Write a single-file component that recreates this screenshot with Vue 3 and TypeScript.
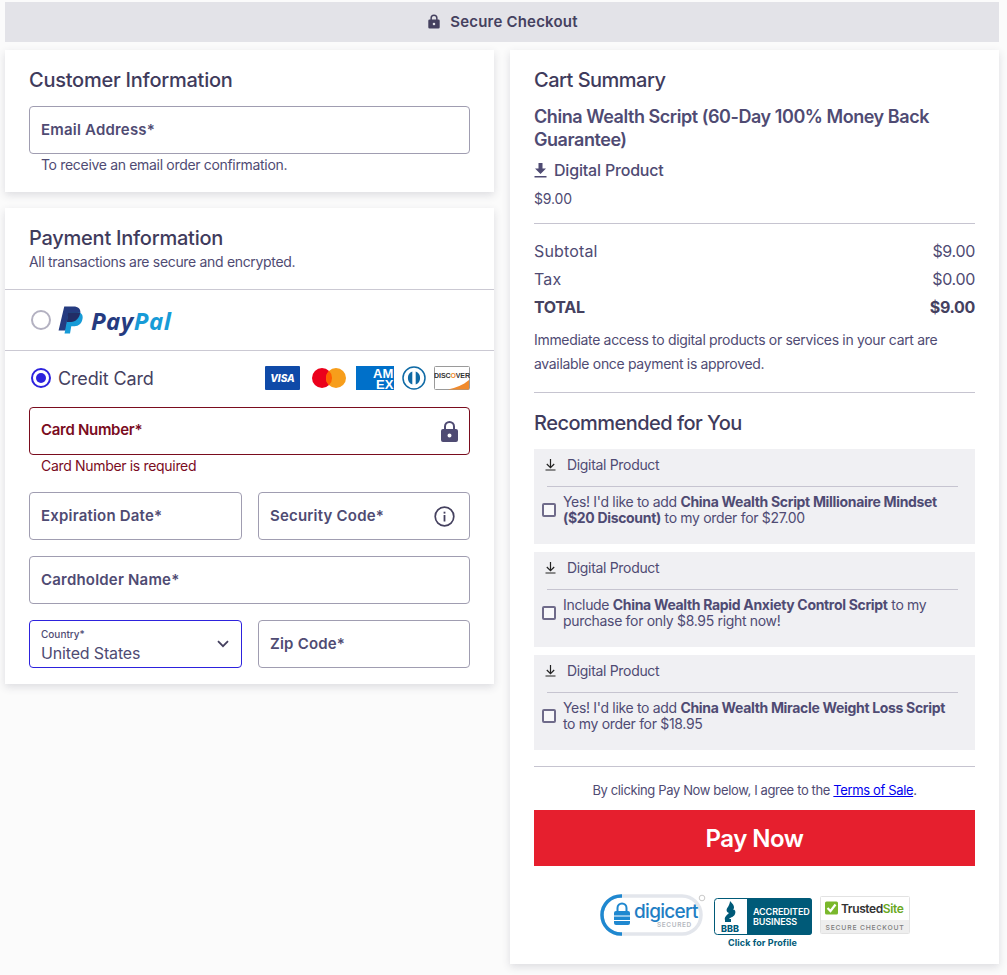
<script setup lang="ts">
interface Offer { before: string; bold: string; after: string }
const offers: Offer[] = [
  { before: "Yes! I'd like to add ", bold: 'China Wealth Script Millionaire Mindset ($20 Discount)', after: ' to my order for $27.00' },
  { before: 'Include ', bold: 'China Wealth Rapid Anxiety Control Script', after: ' to my purchase for only $8.95 right now!' },
  { before: "Yes! I'd like to add ", bold: 'China Wealth Miracle Weight Loss Script', after: ' to my order for $18.95' },
]
</script>

<template>
  <div class="page">
    <header class="topbar">
      <svg class="toplock" viewBox="0 0 12 15" width="12" height="15"><path fill="#45415f" fill-rule="evenodd" d="M6 .5a3.6 3.6 0 0 0-3.6 3.6V5.500H1.600A1.300 1.300 0 0 0 .3 6.800v6.400a1.300 1.300 0 0 0 1.300 1.300h8.800a1.300 1.300 0 0 0 1.300-1.300V6.800a1.300 1.300 0 0 0-1.300-1.300H9.600V4.100A3.600 3.600 0 0 0 6 .5Zm-2.100 5V4.100a2.100 2.100 0 0 1 4.200 0v1.400ZM6 8.700a1.300 1.300 0 1 1 0 2.600 1.300 1.300 0 0 1 0-2.600Z"/></svg>
      <span>Secure Checkout</span>
    </header>

    <main class="columns">
      <div class="left">
        <section class="card customer">
          <h2>Customer Information</h2>
          <div class="field"><span class="label">Email Address*</span></div>
          <p class="help">To receive an email order confirmation.</p>
        </section>

        <section class="card payment">
          <div class="payhead">
            <h2>Payment Information</h2>
            <p>All transactions are secure and encrypted.</p>
          </div>
          <div class="paypal">
            <span class="radio"></span>
            <svg class="pp" viewBox="0 0 26 28" width="25" height="28">
              <path fill="#253b80" d="M6.500 0h9.500c5 0 8 2.600 7.200 7.500-.8 5.500-4.700 8.500-9.500 8.500H9.800L8 25H.6Z"/>
              <path fill="#179bd7" d="M11 6h8.500c4.500 0 6.800 2.500 6 6.800-.8 5-4 7.700-8.300 7.700h-3.400L12.500 28H6.800Z"/>
              <path fill="#222d65" d="M10.600 6h9.600c1 0 2.100.2 2.900.5-.9 5.500-4.700 9.500-9.600 9.500H9.200Z"/>
            </svg>
            <span class="ppword"><i class="p1">Pay</i><i class="p2">Pal</i></span>
          </div>
          <div class="credit">
            <div class="ccrow">
              <span class="radio on"></span>
              <span class="cclabel">Credit Card</span>
              <div class="ccicons">
                <svg width="35" height="24" viewBox="0 0 35 24"><rect width="35" height="24" rx="1" fill="#0f4aa8"/><text x="17.500" y="16" text-anchor="middle" class="visa">VISA</text></svg>
                <svg width="34" height="20" viewBox="0 0 34 20"><circle cx="10" cy="10" r="10" fill="#eb001b"/><circle cx="24" cy="10" r="10" fill="#f79e1b"/><path fill="#ff5f00" d="M17 2.800a10 10 0 0 1 0 14.400 10 10 0 0 1 0-14.400Z"/></svg>
                <svg width="38" height="24" viewBox="0 0 38 24"><rect width="38" height="24" fill="#0070c9"/><text x="17" y="12" class="amex">AM</text><text x="20" y="22.500" class="amex">EX</text></svg>
                <svg width="24" height="24" viewBox="0 0 24 24"><circle cx="12" cy="12" r="11" fill="#fff" stroke="#0f6aa5" stroke-width="1.500"/><path fill="#0f6aa5" d="M10.300 5.500v13a7 7 0 0 1 0-13Zm3.400 0a7 7 0 0 1 0 13Z"/></svg>
                <svg width="36" height="24" viewBox="0 0 36 24"><rect x=".5" y=".5" width="35" height="23" rx="1" fill="#fff" stroke="#9a9a9a"/><path fill="#f08a2c" d="M35 14v9.500H14C22 22 29 19 35 14Z"/><text x="18" y="12" text-anchor="middle" class="disc">DISC<tspan fill="#f08a2c">O</tspan>VER</text></svg>
              </div>
            </div>
            <div class="field error">
              <span class="label">Card Number*</span>
              <svg class="fieldicon" width="17" height="21" viewBox="0 0 17 21"><path fill="#4f4b73" fill-rule="evenodd" d="M8.500 0A5.500 5.500 0 0 0 3 5.500V8H2a2 2 0 0 0-2 2v9a2 2 0 0 0 2 2h13a2 2 0 0 0 2-2v-9a2 2 0 0 0-2-2h-1V5.500A5.500 5.500 0 0 0 8.500 0ZM5 8V5.500a3.500 3.500 0 0 1 7 0V8Zm3.500 4.500a2 2 0 1 1 0 4 2 2 0 0 1 0-4Z"/></svg>
            </div>
            <p class="errtext">Card Number is required</p>
            <div class="grid">
              <div class="field"><span class="label">Expiration Date*</span></div>
              <div class="field">
                <span class="label">Security Code*</span>
                <svg class="fieldicon info" width="21" height="21" viewBox="0 0 21 21"><circle cx="10.500" cy="10.500" r="9.300" fill="none" stroke="#45415f" stroke-width="1.700"/><rect x="9.600" y="9" width="1.800" height="6.500" fill="#45415f"/><rect x="9.600" y="5.700" width="1.800" height="1.900" fill="#45415f"/></svg>
              </div>
              <div class="field wide"><span class="label">Cardholder Name*</span></div>
              <div class="field select">
                <span class="mini">Country*</span>
                <span class="value">United States</span>
                <svg class="chev" width="12" height="8" viewBox="0 0 12 8"><path d="M1 1.200 6 6.200l5-5" fill="none" stroke="#45415f" stroke-width="1.800"/></svg>
              </div>
              <div class="field"><span class="label">Zip Code*</span></div>
            </div>
          </div>
        </section>
      </div>

      <aside class="card summary">
        <h2>Cart Summary</h2>
        <h3>China Wealth Script (60-Day 100% Money Back Guarantee)</h3>
        <div class="digital">
          <svg width="13" height="15" viewBox="0 0 13 15"><path fill="#4f4b73" d="M4.500 0h4v5.500H12L6.500 11 1 5.500h3.500ZM.5 13h12v1.600H.5Z"/></svg>
          <span>Digital Product</span>
        </div>
        <div class="price">$9.00</div>
        <hr />
        <div class="total"><span>Subtotal</span><span>$9.00</span></div>
        <div class="total"><span>Tax</span><span>$0.00</span></div>
        <div class="total strong"><span>TOTAL</span><span>$9.00</span></div>
        <p class="note">Immediate access to digital products or services in your cart are available once payment is approved.</p>
        <hr class="hr2" />
        <h2 class="rec">Recommended for You</h2>
        <div class="offers">
          <div v-for="(o, i) in offers" :key="i" class="offer">
            <div class="offerhead">
              <svg width="11" height="12" viewBox="0 0 11 12"><path d="M5.500 0v8.500M1.800 5 5.500 8.700 9.200 5M.5 11h10" fill="none" stroke="#222" stroke-width="1.200"/></svg>
              <span>Digital Product</span>
            </div>
            <div class="offerline"></div>
            <div class="offerbody">
              <span class="check"></span>
              <p>{{ o.before }}<b>{{ o.bold }}</b>{{ o.after }}</p>
            </div>
          </div>
        </div>
        <hr class="hr3" />
        <p class="terms">By clicking Pay Now below, I agree to the <a href="#">Terms of Sale</a>.</p>
        <button class="pay" type="button">Pay Now</button>
        <div class="badges">
          <svg width="106" height="44" viewBox="0 0 106 44" class="digicert">
            <rect x="2" y="2" width="99" height="38" rx="19" fill="none" stroke="#e3e6ec" stroke-width="3.500"/>
            <path d="M22 2H21A19 19 0 0 0 21 40H22" fill="none" stroke="#1f88d0" stroke-width="3.500"/>
            <path d="M17.500 17v-3a4.500 4.500 0 0 1 9 0v3" fill="none" stroke="#1f88d0" stroke-width="2"/>
            <rect x="14" y="17" width="16" height="14" rx="2" fill="#1f88d0"/>
            <path d="M14 22h16M14 26.500h16" stroke="#fff" stroke-width="1"/>
            <text x="34" y="24" class="dc1">digicert</text>
            <text x="57" y="33" class="dc2">SECURED</text>
            <circle cx="102" cy="4" r="2.800" fill="none" stroke="#bbb" stroke-width=".8"/>
          </svg>
          <div class="bbb">
            <svg width="98" height="38" viewBox="0 0 98 38">
              <rect x=".5" y=".5" width="97" height="36" rx="3" fill="#fff" stroke="#005a78"/>
              <path d="M33 0h62a3 3 0 0 1 3 3v31a3 3 0 0 1-3 3H33Z" fill="#005a78"/>
              <path fill="#005a78" d="M16 3c4 4 5 6 3 9 2-1 3 2 2 4-1 3-4 3-6 5h2v3h-6v-2c-1-3 2-5 4-7-3-1-3-4-1-6 1-2 2-4 2-6Z"/>
              <text x="7" y="33.500" class="bbbt">BBB</text>
              <text x="39" y="17" class="acc">ACCREDITED</text>
              <text x="39" y="27" class="acc">BUSINESS</text>
            </svg>
            <span>Click for Profile</span>
          </div>
          <svg width="90" height="38" viewBox="0 0 90 38" class="ts">
            <rect x=".5" y=".5" width="89" height="37" rx="1" fill="#fff" stroke="#e2e2e2"/>
            <rect x="1" y="24" width="88" height="13" fill="#eee"/>
            <rect x="5" y="5.500" width="13" height="13" rx="1.500" fill="#7ab82c"/>
            <path d="M7.500 12l3 3 5-6.500" fill="none" stroke="#fff" stroke-width="2.200"/>
            <text x="21" y="16.500" class="ts1">Trusted<tspan fill="#6aa81f">Site</tspan></text>
            <text x="45" y="34" text-anchor="middle" class="ts2">SECURE CHECKOUT</text>
          </svg>
        </div>
      </aside>
    </main>
  </div>
</template>

<style>
html, body { background: #fbfbfb; margin: 0; }
</style>

<style scoped>
.page {
  width: 1007px;
  height: 975px;
  overflow: hidden;
  box-sizing: border-box;
  padding: 2px 8px 0 5px;
  font-family: Inter, "Liberation Sans", sans-serif;
  color: #4f4b73;
  font-size: 14px;
  letter-spacing: -0.023em;
}
.topbar {
  height: 40px;
  background: #e3e3e8;
  display: flex;
  align-items: center;
  justify-content: center;
  gap: 10px;
  padding-left: 2px;
  font-weight: 600;
  font-size: 15px;
  color: #45415f;
  letter-spacing: 0.013em;
}
.toplock { margin-top: -1px; }
.topbar span { margin-top: -1px; }
.columns {
  display: grid;
  grid-template-columns: 489px 489px;
  gap: 16px;
  margin-top: 8px;
  align-items: start;
}
.left { display: flex; flex-direction: column; gap: 16px; }
.card {
  background: #fff;
  box-shadow: 0 3px 8px rgba(60, 60, 90, .16);
}
h2 {
  margin: 0;
  font-size: 20px;
  line-height: 24px;
  font-weight: 500;
  color: #3f3b5c;
  letter-spacing: -0.012em;
}
.customer { padding: 18px 24px 18px; height: 142px; box-sizing: border-box; }
.customer h2 { margin-bottom: 14px; }
.field {
  position: relative;
  height: 48px;
  box-sizing: border-box;
  border: 1px solid #a09db1;
  border-radius: 4px;
  padding: 0 11px;
  display: flex;
  align-items: center;
}
.label {
  font-weight: 600;
  font-size: 15px;
  color: #4f4b73;
  margin-top: -1px;
  letter-spacing: 0.013em;
}
.help { margin: 2px 0 0 12px; line-height: 18px; }
.payment { height: 476px; }
.payhead {
  height: 82px;
  box-sizing: border-box;
  padding: 18px 24px 0;
  border-bottom: 1px solid #cbc9d3;
}
.payhead p { margin: 0; line-height: 24px; color: #4f4b73; }
.paypal {
  height: 61px;
  box-sizing: border-box;
  padding: 0 24px 0 26px;
  display: flex;
  align-items: center;
  border-bottom: 1px solid #cbc9d3;
}
.radio {
  width: 20px;
  height: 20px;
  box-sizing: border-box;
  border-radius: 50%;
  border: 2px solid #b3b1c1;
  flex: none;
  position: relative;
  background: #fff;
}
.radio.on { border-color: #2d22dd; }
.radio.on::after {
  content: "";
  position: absolute;
  inset: 3px;
  border-radius: 50%;
  background: #2d22dd;
}
.pp { margin-left: 7px; }
.ppword {
  margin-left: 8px;
  font: italic 700 24px/1 "Open Sans", sans-serif;
  letter-spacing: 0.02em;
  margin-top: 2px;
}
.ppword i.p1 { color: #253b80; }
.ppword i.p2 { color: #179bd7; }
.credit { padding: 14px 24px 0; }
.ccrow {
  display: flex;
  align-items: center;
  height: 26px;
  padding-left: 2px;
  margin-bottom: 16px;
}
.cclabel {
  margin-left: 7px;
  font-size: 18px;
  color: #45415f;
  font-weight: 400;
  letter-spacing: -0.008em;
}
.ccicons { margin-left: auto; display: flex; align-items: center; gap: 0; }
.ccicons svg:nth-child(1) { margin-right: 12px; }
.ccicons svg:nth-child(2) { margin-right: 10px; }
.ccicons svg:nth-child(3) { margin-right: 8px; }
.ccicons svg:nth-child(4) { margin-right: 8px; }
.visa { font: italic 800 10px Inter, sans-serif; fill: #fff; letter-spacing: 0; }
.amex { font: 700 13px "Liberation Sans", sans-serif; fill: #fff; letter-spacing: 0; }
.disc { font: 700 7px "Liberation Sans", sans-serif; fill: #333; letter-spacing: -0.1px; }
.error { border-color: #7a0c1e; }
.error .label { color: #7a0c1e; letter-spacing: -0.02em; margin-top: -3px; }
.fieldicon { position: absolute; right: 11px; top: 13px; }
.fieldicon.info { right: 14px; }
.errtext { margin: 2px 0 0 12px; line-height: 18px; color: #7a0c1e; }
.grid {
  margin-top: 17px;
  display: grid;
  grid-template-columns: 213px 212px;
  gap: 16px;
}
.wide { grid-column: span 2; }
.select { border-color: #2d22dd; display: block; padding-top: 7px; }
.mini { display: block; font-size: 10px; line-height: 13px; font-weight: 500; letter-spacing: 0; }
.value { display: block; font-size: 16px; line-height: 22px; margin-top: 1px; letter-spacing: -0.01em; }
.chev { position: absolute; right: 12px; top: 19px; }
.summary { height: 914px; box-sizing: border-box; padding: 18px 24px 0; }
.summary h2 { letter-spacing: -0.026em; }
h3 {
  margin: 13px 0 0;
  font-size: 18px;
  line-height: 23px;
  font-weight: 600;
  color: #4f4b73;
  letter-spacing: -0.025em;
}
.digital {
  display: flex;
  align-items: center;
  gap: 7px;
  margin-top: 7px;
  height: 24px;
  font-size: 16px;
  font-weight: 500;
  letter-spacing: -0.012em;
}
.price { margin-top: 6px; line-height: 22px; letter-spacing: -0.01em; }
hr { border: 0; border-top: 1px solid #c6c4d0; margin: 13px 0 0; }
.total {
  display: flex;
  justify-content: space-between;
  font-size: 16px;
  line-height: 28px;
  letter-spacing: -0.02em;
}
.total span:first-child { letter-spacing: 0.01em; }
hr + .total { margin-top: 13px; }
.total.strong { font-weight: 700; color: #45415f; }
.total.strong span:first-child { letter-spacing: -0.02em; }
.note { margin: 7px 0 0; line-height: 24px; }
.hr2 { margin-top: 16px; }
.rec { margin-top: 18px; }
.offers { margin-top: 14px; display: flex; flex-direction: column; gap: 8px; }
.offer { height: 95px; box-sizing: border-box; background: #f0f0f3; }
.offerhead {
  height: 31px;
  display: flex;
  align-items: center;
  gap: 11px;
  padding-left: 11px;
}
.offerline { height: 1px; background: #c6c4d0; margin: 6px 17px 0 13px; }
.offerbody { display: flex; align-items: center; padding: 7px 20px 0 8px; }
.check {
  flex: none;
  width: 14px;
  height: 14px;
  box-sizing: border-box;
  border: 2px solid #6f6b8a;
  border-radius: 2px;
  background: #f8f8fa;
  margin-right: 7px;
}
.offerbody p { margin: 0; line-height: 16px; }
.offerbody b { font-weight: 700; }
.hr3 { margin-top: 16px; }
.terms { margin: 14px 0 0; text-align: center; font-size: 13px; line-height: 18px; color: #4f4b73; letter-spacing: -0.028em; }
.terms a { color: #00e; }
.pay {
  display: block;
  width: 100%;
  height: 56px;
  margin-top: 11px;
  background: #e61f2e;
  border: 0;
  color: #fff;
  font-family: inherit;
  font-size: 24px;
  font-weight: 600;
  letter-spacing: -0.02em;
}
.badges { display: flex; justify-content: center; align-items: flex-start; margin-top: 28px; }
.digicert { margin-right: 8px; }
.bbb { display: flex; flex-direction: column; align-items: center; margin-top: 4px; margin-right: 8px; }
.bbb span { font-size: 9px; font-weight: 700; color: #005a78; line-height: 11px; letter-spacing: .01em; margin-top: 1px; }
.ts { margin-top: 2px; }
.dc1 { font: 500 19px Inter, sans-serif; fill: #1f7ec4; letter-spacing: -.7px; }
.dc2 { font: 600 6.500px Inter, sans-serif; fill: #b4b8c0; letter-spacing: .6px; }
.bbbt { font: 800 9px Inter, sans-serif; fill: #005a78; letter-spacing: 0; }
.acc { font: 600 9px Inter, sans-serif; fill: #fff; letter-spacing: -.1px; }
.ts1 { font: 600 12px Inter, sans-serif; fill: #333; letter-spacing: -.4px; }
.ts2 { font: 500 6.800px Inter, sans-serif; fill: #7d7d7d; letter-spacing: .8px; }
</style>
